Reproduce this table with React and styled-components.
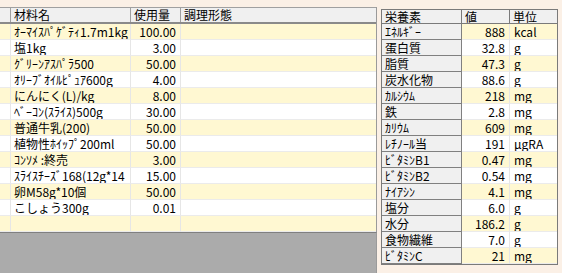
import React from "react";
import styled, { createGlobalStyle } from "styled-components";

const Global = createGlobalStyle`
  html, body { margin: 0; padding: 0; background: #fbf0e6; }
  body { font-family: "Noto Sans CJK JP", "Noto Sans", sans-serif; color: #000; }
`;

const Page = styled.div`
  display: flex;
  align-items: flex-start;
  width: 562px;
  height: 273px;
  overflow: hidden;
  background: #fbf0e6;
`;

const LeftPane = styled.div`
  width: 377px;
  height: 273px;
  padding-top: 7px;
  box-sizing: border-box;
  display: flex;
  flex-direction: column;
`;

const LeftGrid = styled.div`
  border-right: 1px solid #9a9a9a;
  display: flex;
  flex-direction: column;
`;

const HeadRow = styled.div`
  display: flex;
  height: 17px;
  box-sizing: border-box;
  border-top: 1px solid #a0a0a0;
  border-bottom: 2px solid #8a8a8a;
  background: #f0f0f0;
`;

const HeadCell = styled.div`
  width: ${(p) => p.$w}px;
  flex: ${(p) => (p.$grow ? 1 : "none")};
  box-sizing: border-box;
  border-right: ${(p) => (p.$last ? "none" : "1px solid #a0a0a0")};
  padding-left: 3px;
  font-size: 12px;
  line-height: 14px;
  white-space: nowrap;
`;

const Row = styled.div`
  display: flex;
  height: 16px;
  background: ${(p) => (p.$alt ? "#fff8d2" : "#ffffff")};
`;

const Cell = styled.div`
  width: ${(p) => p.$w}px;
  flex: ${(p) => (p.$grow ? 1 : "none")};
  box-sizing: border-box;
  border-right: ${(p) => (p.$last ? "none" : "1px solid #e6e6e6")};
  border-bottom: 1px solid #ebebeb;
  padding: 0 ${(p) => (p.$right ? 4 : 3)}px 0 3px;
  text-align: ${(p) => (p.$right ? "right" : "left")};
  font-size: 12px;
  line-height: 15px;
  white-space: nowrap;
  overflow: hidden;
`;

const Filler = styled.div`
  flex: 1;
  background: #ababab;
  border-top: 1px solid #808080;
  border-right: 1px solid #9a9a9a;
`;

const RightPane = styled.div`
  margin-left: 4px;
  margin-top: 9px;
  border: 1px solid #7a7a7a;
  display: flex;
  flex-direction: column;
`;

const RHeadRow = styled.div`
  display: flex;
  height: 14px;
`;

const RHeadCell = styled.div`
  width: ${(p) => p.$w}px;
  box-sizing: border-box;
  background: #f0f0f0;
  border-right: ${(p) => (p.$last ? "none" : "1px solid #7a7a7a")};
  border-bottom: 1px solid #7a7a7a;
  padding-left: 3px;
  font-size: 12px;
  line-height: 13px;
  white-space: nowrap;
`;

const NameCell = styled.div`
  width: 80px;
  box-sizing: border-box;
  background: #f0f0f0;
  border-right: 1px solid #808080;
  border-bottom: 1px solid #808080;
  padding-left: 3px;
  font-size: 12px;
  line-height: 15px;
  white-space: nowrap;
  overflow: hidden;
`;

const ValCell = styled.div`
  width: ${(p) => p.$w}px;
  box-sizing: border-box;
  border-right: ${(p) => (p.$last ? "none" : "1px solid #e6e6e6")};
  border-bottom: 1px solid #ebebeb;
  padding: 0 4px 0 4px;
  text-align: ${(p) => (p.$right ? "right" : "left")};
  font-size: 12px;
  line-height: 15px;
  white-space: nowrap;
  overflow: hidden;
`;

const ingredients = [
  ["ｵｰﾏｲｽﾊﾟｹﾞﾃｨ1.7m1kg", "100.00"],
  ["塩1kg", "3.00"],
  ["ｸﾞﾘｰﾝｱｽﾊﾟﾗ500", "50.00"],
  ["ｵﾘｰﾌﾞｵｲﾙﾋﾟｭｱ600g", "4.00"],
  ["にんにく(L)/kg", "8.00"],
  ["ﾍﾞｰｺﾝ(ｽﾗｲｽ)500g", "30.00"],
  ["普通牛乳(200)", "50.00"],
  ["植物性ﾎｲｯﾌﾟ200ml", "50.00"],
  ["ｺﾝｿﾒ :終売", "3.00"],
  ["ｽﾗｲｽﾁｰｽﾞ168(12g*14", "15.00"],
  ["卵M58g*10個", "50.00"],
  ["こしょう300g", "0.01"],
  ["", ""],
];

const nutrients = [
  ["ｴﾈﾙｷﾞｰ", "888", "kcal"],
  ["蛋白質", "32.8", "g"],
  ["脂質", "47.3", "g"],
  ["炭水化物", "88.6", "g"],
  ["ｶﾙｼｳﾑ", "218", "mg"],
  ["鉄", "2.8", "mg"],
  ["ｶﾘｳﾑ", "609", "mg"],
  ["ﾚﾁﾉｰﾙ当", "191", "μgRA"],
  ["ﾋﾞﾀﾐﾝB1", "0.47", "mg"],
  ["ﾋﾞﾀﾐﾝB2", "0.54", "mg"],
  ["ﾅｲｱｼﾝ", "4.1", "mg"],
  ["塩分", "6.0", "g"],
  ["水分", "186.2", "g"],
  ["食物繊維", "7.0", "g"],
  ["ﾋﾞﾀﾐﾝC", "21", "mg"],
];

export default function App() {
  return (
    <>
      <Global />
      <Page>
        <LeftPane>
          <LeftGrid>
            <HeadRow>
              <HeadCell $w={11} />
              <HeadCell $w={120}>材料名</HeadCell>
              <HeadCell $w={50}>使用量</HeadCell>
              <HeadCell $grow $last>調理形態</HeadCell>
            </HeadRow>
            {ingredients.map(([name, qty], i) => (
              <Row key={i} $alt={i % 2 === 0}>
                <Cell $w={11} />
                <Cell $w={120}>{name}</Cell>
                <Cell $w={50} $right>{qty}</Cell>
                <Cell $grow $last />
              </Row>
            ))}
          </LeftGrid>
          <Filler />
        </LeftPane>
        <RightPane>
          <RHeadRow>
            <RHeadCell $w={80}>栄養素</RHeadCell>
            <RHeadCell $w={48}>値</RHeadCell>
            <RHeadCell $w={47} $last>単位</RHeadCell>
          </RHeadRow>
          {nutrients.map(([n, v, u], i) => (
            <Row key={i} $alt={i % 2 === 0}>
              <NameCell>{n}</NameCell>
              <ValCell $w={48} $right>{v}</ValCell>
              <ValCell $w={47} $last>{u}</ValCell>
            </Row>
          ))}
        </RightPane>
      </Page>
    </>
  );
}
